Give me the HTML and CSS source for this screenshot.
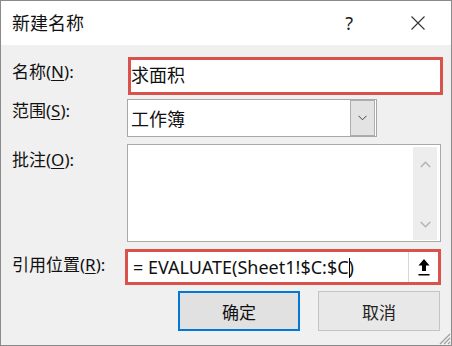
FILE: index.html
```html
<!DOCTYPE html>
<html lang="zh-CN">
<head>
  <meta charset="UTF-8">
  <title>新建名称</title>
  <link rel="stylesheet" href="styles.css">
</head>
<body>
  <div class="dialog">
    <div class="titlebar">
      <span class="title">新建名称</span>
      <span class="help">?</span>
      <svg class="close" width="14" height="14" viewBox="0 0 14 14">
        <path d="M0.5 0.5 L13.5 13.5 M13.5 0.5 L0.5 13.5" stroke="#333" stroke-width="1.1" fill="none"/>
      </svg>
    </div>

    <div class="content">
      <div class="row row-name">
        <label class="label">名称(<u>N</u>):</label>
        <div class="field field-name">求面积</div>
      </div>

      <div class="row row-scope">
        <label class="label">范围(<u>S</u>):</label>
        <div class="field field-scope">
          <span>工作簿</span>
          <span class="dropdown">
            <svg width="9" height="6" viewBox="0 0 9 6"><path d="M0.5 0.8 L4.5 4.8 L8.5 0.8" stroke="#444" stroke-width="1" fill="none"/></svg>
          </span>
        </div>
      </div>

      <div class="row row-note">
        <label class="label">批注(<u>O</u>):</label>
        <div class="field field-note">
          <div class="scrollbar">
            <svg width="11" height="7" viewBox="0 0 11 7"><path d="M0.8 6 L5.5 1.3 L10.2 6" stroke="#b4b4b4" stroke-width="1.6" fill="none"/></svg>
            <svg width="11" height="7" viewBox="0 0 11 7"><path d="M0.8 1 L5.5 5.7 L10.2 1" stroke="#b4b4b4" stroke-width="1.6" fill="none"/></svg>
          </div>
        </div>
      </div>

      <div class="row row-ref">
        <label class="label">引用位置(<u>R</u>):</label>
        <div class="field field-ref">
          <span class="formula">= EVALUATE(Sheet1!$C:$C<span class="caret"></span>)</span>
          <span class="collapse">
            <svg width="12" height="17" viewBox="0 0 12 17">
              <path d="M6 0 L11.5 6.5 L8 6.5 L8 12 L4 12 L4 6.5 L0.5 6.5 Z" fill="#000"/>
              <rect x="0.5" y="15" width="11" height="1.5" fill="#000"/>
            </svg>
          </span>
        </div>
      </div>

      <div class="actions">
        <button class="btn btn-ok">确定</button>
        <button class="btn btn-cancel">取消</button>
      </div>
    </div>

    <svg class="grip" width="13" height="13" viewBox="0 0 13 13">
      <path d="M12 2 L2 12 M12 6 L6 12 M12 10 L10 12" stroke="#a0a0a0" stroke-width="1.2"/>
    </svg>
  </div>
</body>
</html>
```

FILE: styles.css
```css
body {
    margin: 0;
    font-family: "Noto Sans", "Noto Sans CJK SC", sans-serif;
    color: #111;
}
.dialog {
    position: relative;
    width: 452px;
    height: 346px;
    box-sizing: border-box;
    border: 1px solid #8a8a8a;
    background: #f0f0f0;
    overflow: hidden;
}
.titlebar {
    height: 44px;
    background: #fff;
    display: flex;
    align-items: center;
    padding: 0 26px 0 11px;
}
.title {
    font-size: 18px;
    line-height: 24px;
}
.help {
    margin-left: auto;
    font-size: 18px;
    line-height: 24px;
    color: #222;
}
.close {
    margin-left: 58px;
}
.content {
    padding: 12px 0 0 11px;
}
.row {
    display: flex;
    align-items: flex-start;
}
.label {
    width: 115px;
    font-size: 17px;
    line-height: 22px;
}
.label u {
    text-underline-offset: 2px;
}
.field {
    box-sizing: border-box;
    background: #fff;
}
.row-name .label {
    width: 116px;
    padding-top: 4px;
}
.field-name {
    width: 315px;
    height: 38px;
    border: 3px solid #d9534c;
    font-size: 18px;
    line-height: 31px;
}
.row-scope {
    margin-top: 4px;
}
.row-scope .label {
    padding-top: 1px;
}
.field-scope {
    width: 250px;
    height: 38px;
    border: 1px solid #a8a8a8;
    display: flex;
    align-items: center;
    padding-left: 3px;
    font-size: 18px;
}
.dropdown {
    margin-left: auto;
    margin-right: 1px;
    width: 25px;
    height: 36px;
    box-sizing: border-box;
    border: 1px solid #adadad;
    background: #e3e3e3;
    display: flex;
    align-items: center;
    justify-content: center;
}
.row-note {
    margin-top: 7px;
}
.row-note .label {
    padding-top: 5px;
}
.field-note {
    width: 314px;
    height: 98px;
    border: 1px solid #a9a9a9;
    display: flex;
    justify-content: flex-end;
    padding: 2px 3px 1px 0;
}
.scrollbar {
    width: 24px;
    background: #ededed;
    display: flex;
    flex-direction: column;
    align-items: center;
    justify-content: space-between;
    padding: 14px 0 12px;
    box-sizing: border-box;
}
.row-ref {
    margin-top: 7px;
}
.row-ref .label {
    width: 113px;
    padding-top: 5px;
}
.field-ref {
    width: 316px;
    height: 36px;
    border: 3px solid #d9534c;
    display: flex;
}
.formula {
    padding-left: 5px;
    font-size: 18px;
    line-height: 30px;
}
.caret {
    display: inline-block;
    width: 1px;
    height: 20px;
    background: #000;
    vertical-align: -4px;
    margin-right: -1px;
}
.collapse {
    margin-left: auto;
    width: 29px;
    border-left: 1px solid #d6d6d6;
    display: flex;
    align-items: center;
    justify-content: center;
}
.actions {
    display: flex;
    justify-content: flex-end;
    gap: 18px;
    padding-right: 11px;
    margin-top: 6px;
}
.btn {
    width: 122px;
    height: 40px;
    box-sizing: border-box;
    font-family: "Noto Sans CJK SC", sans-serif;
    font-size: 17px;
    color: #111;
    padding: 0;
}
.btn-ok {
    background: #e1e1e1;
    border: 2px solid #0078d7;
}
.btn-cancel {
    background: #e8e8e8;
    border: 1px solid #c4c4c4;
    color: #222;
}
.grip {
    position: absolute;
    right: 0;
    bottom: 0;
}
```
